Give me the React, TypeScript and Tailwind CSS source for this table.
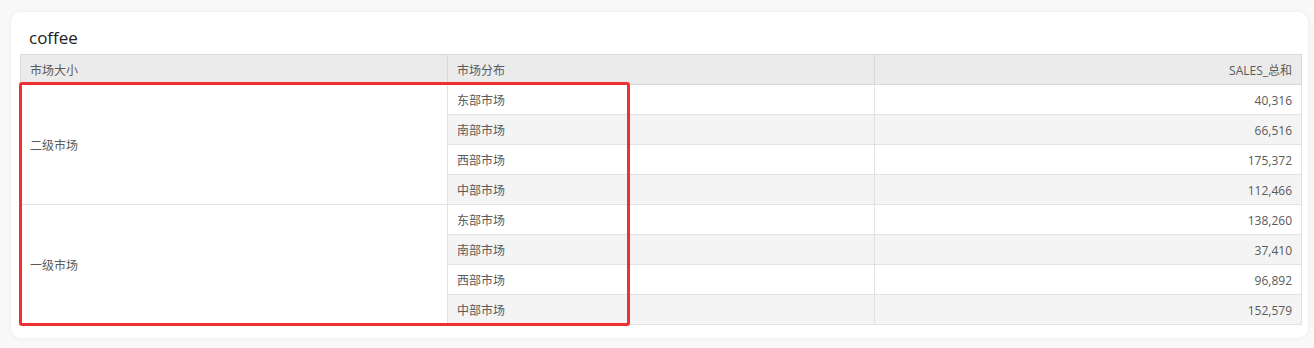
import React from "react";

const groups: { size: string; rows: { region: string; sales: string }[] }[] = [
  {
    size: "二级市场",
    rows: [
      { region: "东部市场", sales: "40,316" },
      { region: "南部市场", sales: "66,516" },
      { region: "西部市场", sales: "175,372" },
      { region: "中部市场", sales: "112,466" },
    ],
  },
  {
    size: "一级市场",
    rows: [
      { region: "东部市场", sales: "138,260" },
      { region: "南部市场", sales: "37,410" },
      { region: "西部市场", sales: "96,892" },
      { region: "中部市场", sales: "152,579" },
    ],
  },
];

const font = {
  fontFamily: '"Open Sans", "Noto Sans CJK SC", sans-serif',
};

export default function App() {
  return (
    <div className="w-[1314px] h-[348px] bg-[#f9f9f9] pl-[11px] pr-[6px] pt-[12px]" style={font}>
      <div className="relative h-[326px] rounded-[10px] bg-white shadow-[0_0_6px_rgba(0,0,0,0.06)] pl-[9px] pr-[7px]">
        <div className="h-[42px] pl-[9px] pt-[15px] text-[17px] leading-[22px] text-[#222]">coffee</div>
        <table className="w-[1281px] table-fixed border-collapse text-[12px] text-[#5a5a5a]">
          <colgroup>
            <col className="w-[427px]" />
            <col className="w-[427px]" />
            <col className="w-[427px]" />
          </colgroup>
          <thead>
            <tr className="h-[30px] bg-[#ebebeb]">
              <th className="border border-[#d9d9d9] px-[9px] pt-[2px] text-left font-normal">市场大小</th>
              <th className="border border-[#d9d9d9] px-[9px] pt-[2px] text-left font-normal">市场分布</th>
              <th className="border border-[#d9d9d9] px-[9px] pt-[2px] text-right font-normal">SALES_总和</th>
            </tr>
          </thead>
          <tbody>
            {groups.map((g) =>
              g.rows.map((r, i) => (
                <tr key={g.size + r.region} className={`h-[30px] ${i % 2 === 1 ? "bg-[#f4f4f4]" : "bg-white"}`}>
                  {i === 0 && (
                    <td rowSpan={4} className="border border-[#e2e2e2] bg-white px-[9px] pt-[2px] text-left">
                      {g.size}
                    </td>
                  )}
                  <td className="border border-[#e2e2e2] px-[9px] pt-[2px]">{r.region}</td>
                  <td className="border border-[#e2e2e2] px-[9px] pt-[2px] text-right">{r.sales}</td>
                </tr>
              ))
            )}
          </tbody>
        </table>
        {/* annotation box */}
        <div className="absolute left-[8px] top-[70px] w-[611px] h-[244px] rounded-[3px] border-[3px] border-[#f03030]" />
      </div>
    </div>
  );
}
